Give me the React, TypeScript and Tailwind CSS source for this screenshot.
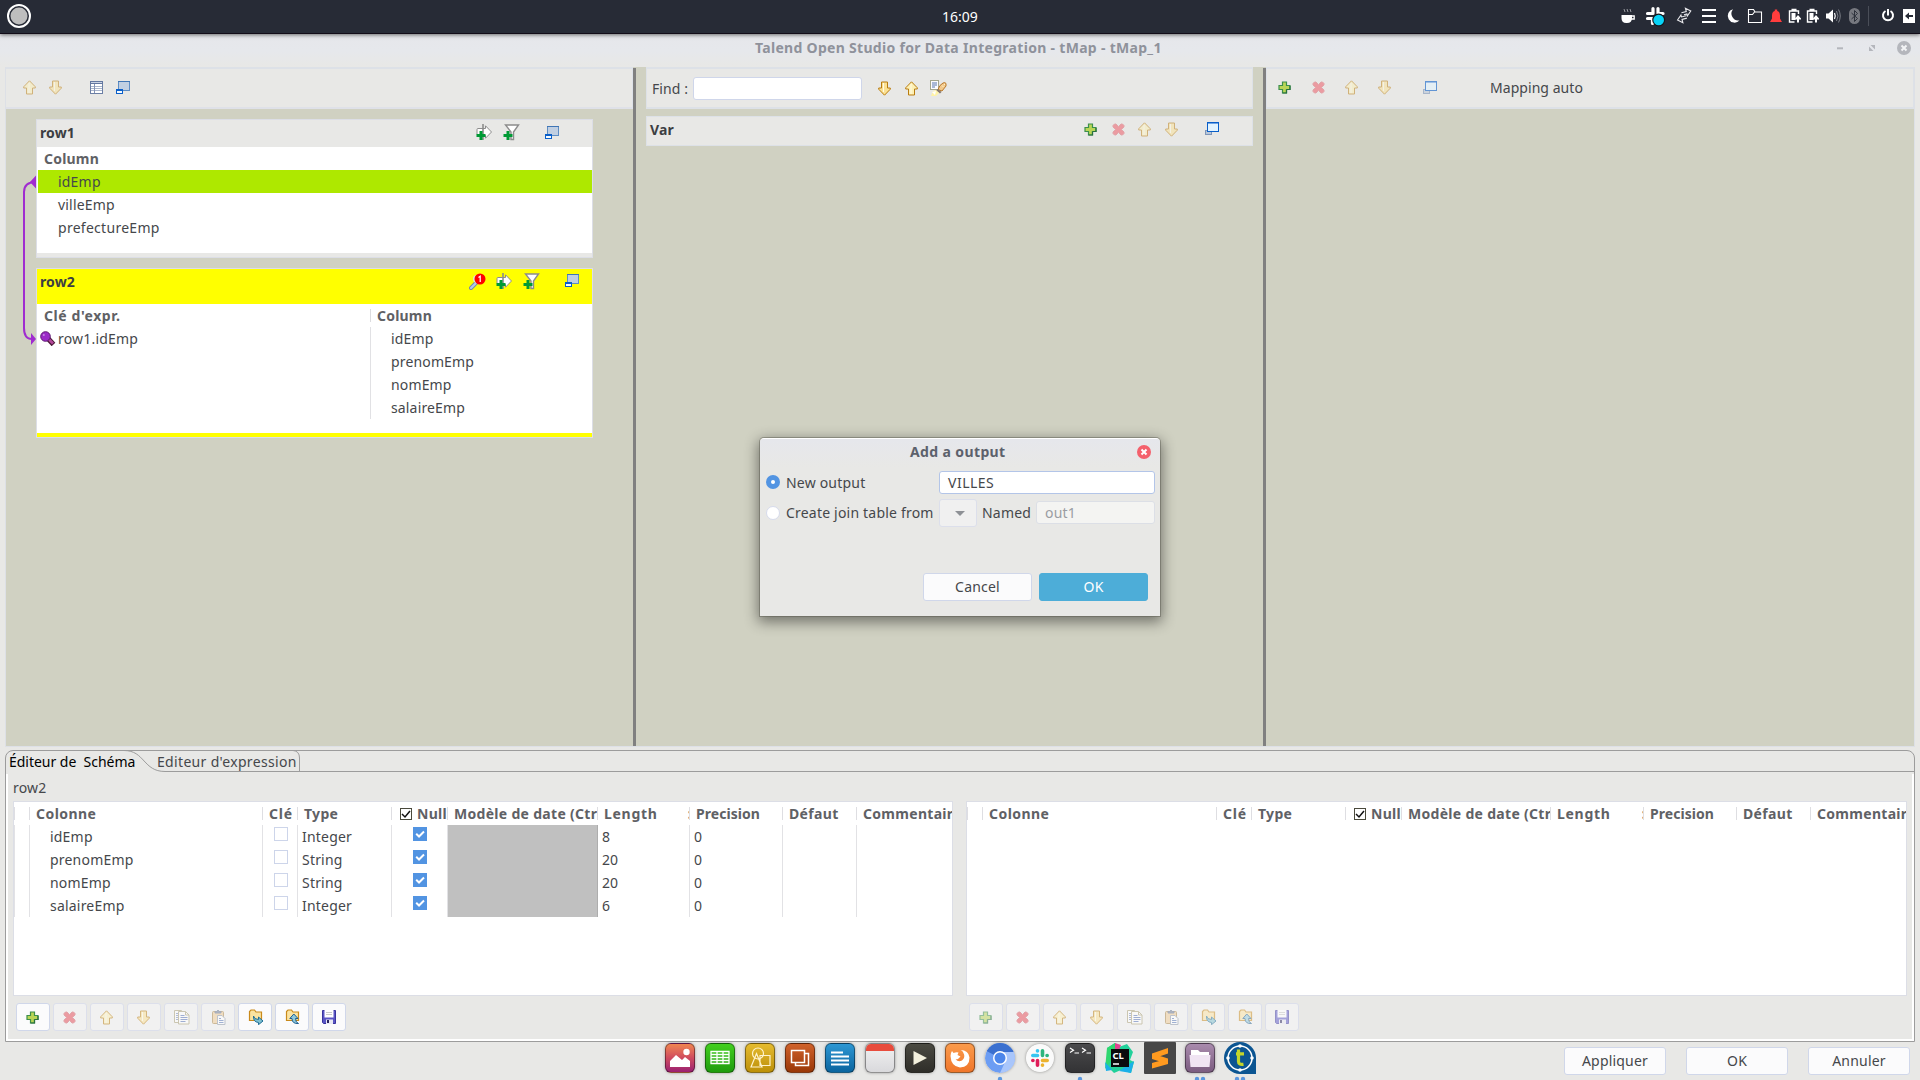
import type { ReactNode } from 'react';

type IconProps = { className?: string };

function Svg({ w = 16, h = 16, className = '', children, crisp = false }: { w?: number; h?: number; className?: string; children: ReactNode; crisp?: boolean }) {
  return (
    <svg width={w} height={h} viewBox={`0 0 ${w} ${h}`} className={`shrink-0 ${className}`} fill="none" shapeRendering={crisp ? 'crispEdges' : undefined}>
      {children}
    </svg>
  );
}

/* ---------- toolbar icons ---------- */

const ArrowUp = ({ className = '' }: IconProps) => (
  <Svg w={13} h={15} className={className}>
    <path d="M6.5 .8 12.3 6.8V8H9.5v6h-6V8H.7V6.800Z" fill="#fdf0b4" stroke="#b97c10" />
    <path d="M6 3v10" stroke="#fffbe6" />
  </Svg>
);
const ArrowDown = ({ className = '' }: IconProps) => (
  <Svg w={13} h={15} className={className}>
    <path d="M6.500 14.200 12.300 8.200V7H9.500V1h-6v6H.7v1.200Z" fill="#fbe193" stroke="#b97c10" />
    <path d="M5.500 2v9" stroke="#fffbe6" />
  </Svg>
);
const Plus = ({ className = '' }: IconProps) => (
  <Svg w={13} h={13} className={className}>
    <path d="M4.500 1h4v3.500h3.500v4H8.500v3.500h-4V8.500H1v-4h3.500Z" fill="#b9d556" stroke="#3c8f4c" strokeWidth="1.200" />
    <path d="M8.500 8.500v3.500h-4M12 5v3.500H9" stroke="#28703f" strokeWidth="1.200" />
  </Svg>
);
const Cross = ({ className = '' }: IconProps) => (
  <Svg w={13} h={13} className={className}>
    <path d="M1 2.500 2.500 1h1.500L6.500 3.700 9 1h1.500L12 2.500V4L9.300 6.500 12 9v1.500L10.500 12H9L6.500 9.300 4 12H2.500L1 10.500V9L3.700 6.500 1 4Z" fill="#eb9ba1" stroke="#e1a4a9" />
  </Svg>
);
const TableIcon = () => (
  <Svg w={14} h={14} crisp>
    <rect x=".5" y="1.500" width="12" height="12" fill="#fff" stroke="#6b7fa5" />
    <rect x="0" y="1" width="13" height="3" fill="#6377a0" />
    <path d="M1 6.500h11M1 8.500h11M1 10.500h11" stroke="#a9b5cc" />
    <path d="M4.500 4v9" stroke="#8292b4" />
    <path d="M1 2.500h11" stroke="#c9d3e4" />
  </Svg>
);
const Minimize = ({ className = '' }: IconProps) => (
  <Svg w={14} h={14} crisp className={className}>
    <rect x="2.500" y="1.500" width="11" height="9" fill="#c0cfe2" stroke="#5e8dc4" />
    <path d="M2 1.500h12" stroke="#3f75b5" />
    <rect x=".5" y="9.500" width="6" height="4" fill="#f4faff" stroke="#0a5fc9" />
    <path d="M0 10h7" stroke="#0a5fc9" />
  </Svg>
);
const Restore = ({ className = '' }: IconProps) => (
  <Svg w={14} h={14} crisp className={className}>
    <rect x=".5" y="9.500" width="6" height="4" fill="#b9c6d8" stroke="#7f96b8" />
    <rect x="2.500" y="1.500" width="11" height="9" fill="#e3f4ff" stroke="#0a5fc9" />
    <path d="M2 1.500h12" stroke="#0a5fc9" />
    <path d="M3 2.500h10" stroke="#6fa5e6" />
  </Svg>
);
const GreenCross = () => <path d="M3.500 7h3v3h3v3h-3v3h-3v-3h-3v-3h3Z" fill="#009a35" />;
const AddArrow = () => (
  <Svg w={17} h={17}>
    <path d="M1 10.500v-5Q1 4.500 2 4.500h7.500V1.800L15.500 8 9.500 14.200V11.500Z" fill="#fff" stroke="#8c8c8c" />
    <path d="M7 0v16" stroke="#8c8c8c" strokeWidth="1.600" />
    <GreenCross />
  </Svg>
);
const AddFilter = () => (
  <Svg w={17} h={17}>
    <path d="M2.500 1h13L10.500 8v7.500H8V8Z" fill="#fff" stroke="#8c8c8c" strokeWidth="1.400" />
    <GreenCross />
  </Svg>
);
const LookupIcon = () => (
  <Svg w={18} h={17}>
    <path d="M2 15 8 9" stroke="#6f86ac" strokeWidth="4" strokeLinecap="round" />
    <path d="M2 15 7 10" stroke="#b4c8e8" strokeWidth="2.200" strokeLinecap="round" />
    <circle cx="8" cy="6" r="4" fill="#dfe9d8" />
    <circle cx="11" cy="6" r="5.500" fill="#f00" />
    <path d="M9.500 4.500 11.200 3.200V9" stroke="#fff" strokeWidth="1.200" />
  </Svg>
);
const KeyIcon = () => (
  <Svg w={16} h={15}>
    <path d="M8 7.500 13.500 13.500" stroke="#4a1836" strokeWidth="5" />
    <path d="M7.500 7 13 12.500" stroke="#b3479a" strokeWidth="2.600" />
    <circle cx="5.500" cy="5.500" r="4.800" fill="#9b2bc7" stroke="#5d1a70" />
    <circle cx="3.800" cy="4" r="1" fill="#c98ae6" />
  </Svg>
);
const Highlight = () => (
  <Svg w={17} h={17}>
    <rect x=".5" y=".5" width="8" height="9" fill="#fbfcfe" stroke="#a3a68e" />
    <path d="M2 3h5M2 5h5M2 7h3" stroke="#5675ad" />
    <path d="M8 9.500 10 5.500l3-2.500q2-1 3 .5v2.500l-4 5Z" fill="#f2c98c" stroke="#b9782a" />
    <path d="M12 5.500 13.500 7M14 4l1 1" stroke="#fff1c9" />
    <path d="M8 9 11.500 12 10 13.500 6 10.500Z" fill="#86786f" />
    <path d="M3 11 6 10 9 13 6 16H1Z" fill="#fff3a8" />
    <path d="M2 12 6 11 5 15Z" fill="#fff" />
  </Svg>
);
const CopyIcon = () => (
  <Svg w={16} h={16}>
    <path d="M.5 1.500h7v12h-7Z" fill="#fff" stroke="#a79d73" />
    <path d="M2 4.500h3M2 6.500h3M2 8.500h3M2 10.500h3" stroke="#7186ba" />
    <path d="M4.500 2.500h7l3.500 3.500v9H4.500Z" fill="#fff" stroke="#a79d73" />
    <path d="M11.500 2.500V6H15" stroke="#a79d73" />
    <path d="M6.500 6.500h4M6.500 8.500h7M6.500 10.500h7M6.500 12.500h5" stroke="#4f6db5" />
  </Svg>
);
const PasteIcon = () => (
  <Svg w={16} h={16}>
    <rect x="1.500" y="2.500" width="11" height="12" rx="1" fill="#f0cb93" stroke="#a98243" />
    <path d="M4 4V2.500h1.500Q7 0 8.500 2.500H10V4Z" fill="#6c7a96" stroke="#5e6b87" />
    <path d="M6.500 6.500h4.500l3 3v6h-7.500Z" fill="#fff" stroke="#8b97a9" />
    <path d="M8 9.500h2M8 11.500h4.500M8 13.500h4.500" stroke="#5273b6" />
  </Svg>
);
const Folder = () => (
  <path d="M1.500 11.500v-9l1.500-1.500h3.500L8 3h5.500v8.500Z" fill="#fbe3a0" stroke="#c98a1b" strokeWidth="1.200" />
);
const ImportIcon = () => (
  <Svg w={16} h={16}>
    <Folder />
    <path d="M5.500 7q.5 3.500 5 3.500V8l4.500 4-4.500 3.700V13.500Q5 13 5.500 7Z" fill="#7fc0cf" stroke="#1f6d96" />
  </Svg>
);
const ExportIcon = () => (
  <Svg w={16} h={16}>
    <Folder />
    <path d="M13.500 14.500Q7 15 7 9.500H4.800L8.800 5l4.200 4.500H10.500q0 4 3 5Z" fill="#8fc9dc" stroke="#1f5f90" />
  </Svg>
);
const SaveIcon = () => (
  <Svg w={14} h={16}>
    <path d="M.5 1.500h13v13H1.500l-1-1Z" fill="#5a55c4" stroke="#39349e" />
    <rect x="2.500" y="1" width="9" height="7.500" fill="#fff" />
    <path d="M4 3.500h6M4 5.500h6" stroke="#c9c9c9" />
    <rect x="4" y="10.500" width="7" height="4.500" fill="#e9e9f4" />
    <rect x="5" y="11" width="2" height="3" fill="#28235c" />
  </Svg>
);

/* ---------- top panel ---------- */

function TopBar() {
  return (
    <div className="z-10 flex h-[34px] shrink-0 items-center border-b border-[#120c18] bg-[#272b36] pb-px shadow-[0_1px_4px_rgba(0,0,0,0.55)]">
      <Svg w={26} h={26} className="ml-[6px]">
        <circle cx="13" cy="13" r="11" stroke="#fff" strokeWidth="2" />
        <circle cx="13" cy="13" r="8.500" fill="#bebebe" />
      </Svg>
      <span className="ml-[910px] w-[37px] pt-px text-[14px] tracking-normal text-white">16:09</span>
      <Svg w={300} h={32} className="ml-[641px]">
        {/* cup */}
        <path d="M1.500 15h10.500v3q0 5-5 5h-.8q-4.700 0-4.700-5Z" fill="#fff" />
        <path d="M12 16h2.200v3H11" stroke="#fff" strokeWidth="1.300" />
        <path d="M4 9l1 3M7 9l1 3M10 9l1 3" stroke="#9a9ca2" />
        {/* slack */}
        <g stroke="#fff" strokeWidth="3.200" strokeLinecap="round">
          <path d="M33 8.500v5M27.500 13.500h5M38 8.500v5M38 13.500h5M27.500 18.500h5v5" />
        </g>
        <circle cx="38.700" cy="20" r="6.500" fill="#14161c" />
        <circle cx="38.700" cy="20" r="5.300" fill="#07d3f7" />
        {/* transfer */}
        <path d="M62 12.500h5V9l4.500 4-4.500 4v-2h-3M66 16.500h-5v-2l-4.500 4 4.500 4V19h5" stroke="#e9e9ec" strokeWidth="1.100" transform="rotate(-14 63 15)" />
        {/* menu */}
        <path d="M82 10h14M82 16h14M82 22h14" stroke="#fff" strokeWidth="2" />
        {/* moon */}
        <path d="M113 9.200a6.800 6.800 0 1 0 6.500 11.300A7 7 0 0 1 113 9.200Z" fill="#fff" />
        {/* folder */}
        <path d="M128.500 22.500v-13h5l1.500 2.500h6.500v10.500ZM128.500 14.500h4l2-2.500" stroke="#fff" strokeWidth="1.100" />
        {/* bell */}
        <path d="M150 22h12l-2-3.500v-3q0-4-2.800-4.500V9.500h-2.400v1.500Q152 11.500 152 15.500v3Z" fill="#ff3d3d" />
        {/* batteries */}
        {[168.5, 186.500].map((x) => (
          <g key={x}>
            <path d={`M${x + 6} 22h-5V11h9v3M${x + 3} 9.500h5`} stroke="#fff" strokeWidth="1.400" />
            <rect x={x + 3} y="13" width="4" height="7" fill="#fff" />
            <path d={`M${x + 6.5} 18.500l3-3.500 3 3.500v1h-2V22.500h-2v-3h-2Z`} fill="#fff" />
          </g>
        ))}
        {/* volume */}
        <path d="M206 13.500h2.500L213 9.500v13l-4.500-4H206Z" fill="#fff" />
        <path d="M214.500 13q1.500 3 0 6" stroke="#fff" strokeWidth="1.200" />
        <path d="M216.500 11q3 5 0 10M218.500 9.500q3.500 6.500 0 13" stroke="#7c7f87" />
        {/* bluetooth */}
        <rect x="229" y="8" width="11" height="16" rx="5.500" fill="#76787f" />
        <path d="M231.500 13l6 5.500-3 3v-11l3 3-6 5.500" stroke="#2e323c" />
        <path d="M248.500 6v20" stroke="#4a4e58" />
        {/* power */}
        <path d="M265.500 11a5 5 0 1 0 5 0" stroke="#fff" strokeWidth="2" />
        <path d="M268 9v6.500" stroke="#fff" strokeWidth="2" />
        {/* log out */}
        <rect x="283" y="9" width="12" height="14" fill="#fff" />
        <path d="M293 16h-6" stroke="#272b36" strokeWidth="2" />
        <path d="M285 16l4-3.500v7Z" fill="#272b36" />
      </Svg>
    </div>
  );
}

function TitleBar() {
  return (
    <div className="flex h-[33px] shrink-0 items-start bg-gradient-to-b from-[#e6e7eb] via-[#e6e8ec] to-[#e8e8e6] pt-[4px]">
      <span className="ml-[755px] h-5 w-[1000px] text-[14px] leading-5 font-bold tracking-[0.3px] text-[#8f929b]">Talend Open Studio for Data Integration - tMap - tMap_1</span>
      <Svg w={80} h={20} className="ml-[82px]">
        <path d="M0 10.300h6" stroke="#b4b6bc" strokeWidth="2" />
        <path d="M33.500 7h4.500v4.500ZM32 8.500v4.500h4.500Z" fill="#b4b6bc" />
        <circle cx="67" cy="10" r="7" fill="#b4b6bc" />
        <path d="M64.500 7.500l5 5M69.500 7.500l-5 5" stroke="#f3f4f6" strokeWidth="2" />
      </Svg>
    </div>
  );
}

/* ---------- mapper area ---------- */

const bold = 'font-bold tracking-[0.2px]';

function Row({ children, className = '' }: { children?: ReactNode; className?: string }) {
  return <div className={`flex h-[23px] items-center whitespace-pre ${className}`}>{children}</div>;
}

function InputPanel() {
  return (
    <div className="relative flex w-[628px] shrink-0 flex-col border-l border-[#dde0e6]">
      <div className="flex h-[42px] items-center border-y-2 border-r border-[#dde1e7] border-b-[#dfe1e8] bg-[#e8e8e6] pb-px">
        <ArrowUp className="ml-[17px] opacity-50" />
        <ArrowDown className="ml-[13px] opacity-50" />
        <span className="mb-[2px] ml-[28px]"><TableIcon /></span>
        <span className="mb-[2px] ml-[12px]"><Minimize /></span>
      </div>

      <div className="mt-[10px] ml-[30px] w-[557px] border border-[#dcdee6] bg-[#e8e8e6]">
        <div className="flex h-[27px] items-center pb-[2px]">
          <span className="ml-[3px] w-[436px] text-[#3c3e42] font-bold tracking-[0.1px]">row1</span>
          <AddArrow />
          <span className="ml-[10px]"><AddFilter /></span>
          <span className="mb-[2px] ml-[25px]"><Minimize /></span>
        </div>
        <div className="h-[106px] bg-white">
          <Row className={`pl-[7px] text-[#5f6165] ${bold}`}>Column</Row>
          <Row className="ml-px bg-[#aee800] pl-[20px]">idEmp</Row>
          <Row className="pl-[21px]">villeEmp</Row>
          <Row className="pl-[21px] tracking-[0.28px]">prefectureEmp</Row>
        </div>
        <div className="h-[4px]" />
      </div>

      <div className="mt-[10px] ml-[30px] w-[557px] border border-[#dcdee6] bg-[#ffff00]">
        <div className="flex h-[35px] items-start pt-[3px]">
          <span className="ml-[3px] w-[429px] leading-[20px] text-[#3c3e42] font-bold tracking-[0.1px]">row2</span>
          <span className="mt-px"><LookupIcon /></span>
          <span className="mt-px ml-[9px]"><AddArrow /></span>
          <span className="mt-px ml-[10px]"><AddFilter /></span>
          <span className="mt-px ml-[25px]"><Minimize /></span>
        </div>
        <div className="flex h-[129px] bg-white">
          <div className="w-[333px]">
            <Row className="pl-[7px] font-bold tracking-[0.6px] text-[#5f6165]">Clé d'expr.</Row>
            <Row className="pl-[3px]"><KeyIcon /><span className="ml-[2px]">row1.idEmp</span></Row>
          </div>
          <div className="w-px pt-[5px]">
            <div className="h-[13px] bg-[#dcdcdf]" />
            <div className="mt-[5px] h-[92px] bg-[#e1e1e4]" />
          </div>
          <div>
            <Row className={`pl-[6px] text-[#5f6165] ${bold}`}>Column</Row>
            {['idEmp', 'prenomEmp', 'nomEmp', 'salaireEmp'].map((c) => <Row key={c} className="pl-[20px] tracking-[0.15px]">{c}</Row>)}
          </div>
        </div>
        <div className="h-[4px]" />
      </div>

      <svg width="24" height="180" viewBox="0 0 24 180" fill="none" className="absolute top-[103px] left-[9px]">
        <path d="M21 12Q9 12 9 22V158Q9 169 17 169" stroke="#a02cd0" strokeWidth="2" />
        <path d="M15 12 21 5.500v13ZM21 169l-5-6v12Z" fill="#a02cd0" />
      </svg>
    </div>
  );
}

function VarPanel() {
  return (
    <div className="flex w-[627px] shrink-0 flex-col border-x-0 pl-[10px]">
      <div className="flex h-[42px] w-[607px] items-center border-y-2 border-x border-[#dde1e7] bg-[#e8e8e6]">
        <span className="ml-[5px] w-[41px] pt-px tracking-[0.1px]">Find :</span>
        <div className="h-[23px] w-[169px] rounded-[3px] border border-[#cfd6ea] bg-white" />
        <ArrowDown className="ml-[16px]" />
        <ArrowUp className="ml-[14px]" />
        <span className="ml-[12px]"><Highlight /></span>
      </div>
      <div className="mt-[7px] flex h-[30px] w-[607px] items-center border border-[#dde1e7] bg-[#e8e8e6] pb-[3px]">
        <span className="ml-[3px] w-[434px] font-bold tracking-[0.2px] text-[#3c3e42]">Var</span>
        <Plus />
        <Cross className="ml-[15px]" />
        <ArrowUp className="ml-[13px] opacity-50" />
        <ArrowDown className="ml-[14px] opacity-50" />
        <Restore className="mb-[3px] ml-[27px]" />
      </div>
    </div>
  );
}

function OutputPanel() {
  return (
    <div className="flex grow flex-col border-r border-[#dde0e6]">
      <div className="flex h-[42px] items-center border-y-2 border-x border-[#dde1e7] bg-[#e8e8e6] pb-px">
        <Plus className="ml-[11px]" />
        <Cross className="ml-[21px]" />
        <ArrowUp className="ml-[20px] opacity-50" />
        <ArrowDown className="ml-[20px] opacity-50" />
        <Restore className="mb-px ml-[32px] opacity-60" />
        <span className="ml-[53px] tracking-[0.05px]">Mapping auto</span>
      </div>
    </div>
  );
}

/* ---------- schema editor ---------- */

function ClassicCheck() {
  return (
    <Svg w={12} h={12} crisp>
      <rect x=".5" y=".5" width="11" height="11" fill="#fff" stroke="#4a4a3c" />
      <path d="M2 6l3 3 5-6" stroke="#111" strokeWidth="1.500" shapeRendering="auto" />
    </Svg>
  );
}

type SchemaRow = { name: string; type: string; length: string };
const schema: SchemaRow[] = [
  { name: 'idEmp', type: 'Integer', length: '8' },
  { name: 'prenomEmp', type: 'String', length: '20' },
  { name: 'nomEmp', type: 'String', length: '20' },
  { name: 'salaireEmp', type: 'Integer', length: '6' },
];

const leftGrid = 'grid-cols-[15px_233px_35px_94px_56px_150px_92px_93px_74px_98px]';
const rightGrid = 'grid-cols-[15px_234px_35px_94px_56px_149px_93px_93px_74px_98px]';

function HeadCell({ children }: { children?: ReactNode }) {
  return (
    <div className="flex items-center overflow-hidden">
      <div className="h-[13px] w-px shrink-0 bg-[#dedee2]" />
      {children}
    </div>
  );
}
function Cell({ children, className = '' }: { children?: ReactNode; className?: string }) {
  return <div className={`flex items-center border-l border-[#e2e2e5] ${className}`}>{children}</div>;
}

function SchemaTable({ rows, grid, width }: { rows: SchemaRow[]; grid: string; width: string }) {
  return (
    <div className={`h-[195px] shrink-0 overflow-hidden border border-[#dcdee6] bg-white ${width}`}>
      <div className={`grid h-[23px] whitespace-nowrap font-bold tracking-[0.3px] text-[#5f6165] ${grid}`}>
        <HeadCell />
        <HeadCell><span className="ml-[6px] tracking-[0.45px]">Colonne</span></HeadCell>
        <HeadCell><span className="ml-[6px] tracking-[0.8px]">Clé</span></HeadCell>
        <HeadCell><span className="ml-[6px]">Type</span></HeadCell>
        <HeadCell><span className="mr-[5px] ml-[8px]"><ClassicCheck /></span>Nulla</HeadCell>
        <HeadCell><span className="ml-[6px] tracking-[0.3px]">Modèle de date (Ctrl</span></HeadCell>
        <HeadCell><span className="ml-[6px] tracking-[0.7px]">Length</span><span className="ml-auto -mr-[3px]">:</span></HeadCell>
        <HeadCell><span className="ml-[6px] tracking-[0.05px]">Precision</span></HeadCell>
        <HeadCell><span className="ml-[6px] tracking-[0.35px]">Défaut</span></HeadCell>
        <HeadCell><span className="ml-[6px] tracking-[0.3px]">Commentaire</span></HeadCell>
      </div>
      {rows.map((r) => (
        <div key={r.name} className={`grid h-[23px] ${grid}`}>
          <Cell />
          <Cell className="pl-[20px]">{r.name}</Cell>
          <Cell className="pb-[5px] pl-[11px]"><div className="size-[14px] border border-[#cdd5ea] bg-white" /></Cell>
          <Cell className="pl-[4px]">{r.type}</Cell>
          <Cell className="pb-[5px] pl-[21px]">
            <Svg w={14} h={14}>
              <rect width="14" height="14" fill="#5294e2" />
              <path d="M3.200 6.800l2.800 2.700 5-5" stroke="#fff" strokeWidth="2" />
            </Svg>
          </Cell>
          <Cell className="bg-[#c0c0c0]" />
          <Cell className="border-l-[#adadad] pl-[4px] tracking-normal">{r.length}</Cell>
          <Cell className="pl-[4px]">0</Cell>
          <Cell />
          <Cell />
        </div>
      ))}
    </div>
  );
}

function ToolButtons({ enabled }: { enabled: boolean[] }) {
  const icons = [<Plus />, <Cross />, <ArrowUp />, <ArrowDown />, <CopyIcon />, <PasteIcon />, <ImportIcon />, <ExportIcon />, <SaveIcon />];
  return (
    <div className="flex gap-[3px]">
      {icons.map((icon, i) => (
        <div
          key={i}
          className={`flex h-[28px] w-[34px] items-center justify-center rounded-[3px] border ${enabled[i] ? 'border-[#d0d7ea] bg-[#fbfbfc]' : 'border-[#dcdfeb] bg-[#f1f1f1]'}`}
        >
          <span className={`${enabled[i] || i === 1 ? '' : 'opacity-50'} ${i < 4 ? 'pr-px' : i < 8 ? 'pl-px' : ''}`}>{icon}</span>
        </div>
      ))}
    </div>
  );
}

function PushButton({ children, primary = false, className = '' }: { children: string; primary?: boolean; className?: string }) {
  return (
    <div className={`flex h-[28px] items-center justify-center rounded-[3px] border ${primary ? 'border-[#4dadd8] bg-[#4dadd8] text-white' : 'border-[#d0d7ea] bg-[#fbfbfc]'} ${className}`}>
      {children}
    </div>
  );
}

function SchemaEditor() {
  const on = [true, false, false, false, false, false, true, true, true];
  const off = on.map(() => false);
  return (
    <div className="mt-[3px] ml-[5px] flex h-[292px] w-[1910px] shrink-0 flex-col rounded-t-[8px] border border-[#9c9c9c]">
      <div className="relative flex h-[21px] shrink-0">
        <svg width="1908" height="22" viewBox="0 0 1908 22" fill="none" className="absolute top-0 left-0">
          <path d="M118 -.5C139 -.5 137 20.500 159 20.500H1908" stroke="#9c9c9c" />
          <path d="M118 -.5H287Q293.500 0 293.500 7V20.500" stroke="#9c9c9c" />
        </svg>
        <span className="ml-[3px] w-[148px] leading-[22px] whitespace-pre text-black tracking-[-0.02px]">Éditeur de  Schéma</span>
        <span className="leading-[22px] tracking-[0.33px]">Editeur d'expression</span>
      </div>
      <div className="mt-[2px] flex grow flex-col border-x-2 border-b-2 border-white pl-[5px]">
        <span className="mt-[3px] h-[24px] leading-[22px]">row2</span>
        <div className="flex">
          <SchemaTable rows={schema} grid={leftGrid} width="w-[940px]" />
          <SchemaTable rows={[]} grid={rightGrid} width="ml-[13px] w-[941px]" />
        </div>
        <div className="mt-[7px] ml-[3px] flex">
          <div className="w-[953px]"><ToolButtons enabled={on} /></div>
          <ToolButtons enabled={off} />
        </div>
      </div>
    </div>
  );
}

/* ---------- dialog ---------- */

function OutputDialog() {
  return (
    <div className="absolute top-[438px] left-[760px] flex h-[178px] w-[400px] flex-col rounded-t-[4px] border-t border-white bg-[#e8e8e6] shadow-[0_0_0_1px_rgba(90,90,80,0.45),0_4px_14px_2px_rgba(0,0,0,0.45)]">
      <div className="flex h-[28px] items-center rounded-t-[4px] bg-gradient-to-b from-[#e6e7ec] to-[#e8e8e6] pb-[2px]">
        <span className="ml-[150px] w-[227px] font-bold tracking-[0.38px] text-[#5c616c]">Add a output</span>
        <Svg w={14} h={14}>
          <circle cx="7" cy="7" r="7" fill="#f4606c" />
          <path d="M4.500 4.500l5 5M9.500 4.500l-5 5" stroke="#fff" strokeWidth="2" />
        </Svg>
      </div>
      <div className="mt-[4px] flex h-[23px] items-center">
        <div className="mb-[2px] ml-[6px] flex size-[14px] items-center justify-center rounded-full bg-[#5294e2]">
          <div className="size-[4px] rounded-full bg-white" />
        </div>
        <span className="ml-[6px] w-[153px]">New output</span>
        <div className="flex h-[23px] w-[216px] items-center rounded-[3px] border border-[#b3c5e8] bg-white pl-[8px] tracking-[0.5px]">VILLES</div>
      </div>
      <div className="mt-[5px] flex h-[28px] items-center">
        <div className="ml-[6px] size-[14px] rounded-full border border-[#d6dbec] bg-white" />
        <span className="ml-[6px] w-[153px]">Create join table from</span>
        <div className="flex h-[28px] w-[38px] items-center justify-center rounded-[3px] border border-[#dcdfeb] bg-[#f0f0f0] pl-[4px]">
          <Svg w={10} h={5}><path d="M0 0h10L5 5Z" fill="#8e9196" /></Svg>
        </div>
        <span className="ml-[5px] w-[54px]">Named</span>
        <div className="mb-px flex h-[23px] w-[119px] items-center rounded-[3px] border border-[#dcdfe6] bg-[#f4f4f2] pl-[8px] text-[#9a9da2]">out1</div>
      </div>
      <div className="mt-[46px] ml-[163px] flex gap-[7px]">
        <PushButton className="w-[109px]">Cancel</PushButton>
        <PushButton primary className="w-[109px]">OK</PushButton>
      </div>
    </div>
  );
}

/* ---------- dock ---------- */

function Tile({ className, children }: { className: string; children?: ReactNode }) {
  return (
    <div className={`size-[30px] overflow-hidden rounded-[6px] border border-black/40 shadow-[0_0_3px_rgba(0,0,0,0.35)] ${className}`}>
      <svg width="28" height="28" viewBox="0 0 28 28" fill="none">{children}</svg>
    </div>
  );
}

function Dock() {
  return (
    <div className="absolute top-[1042px] left-[665px] flex items-start gap-[10px] pt-px">
      <Tile className="bg-gradient-to-b from-[#f0854f] via-[#cf4a5e] to-[#9b1e70]">
        <path d="M4 23v-6l6-6 6 5 3-3 5 4v6Z" fill="#fff" />
        <circle cx="20.500" cy="8" r="3.200" fill="#fff" />
      </Tile>
      <Tile className="bg-gradient-to-b from-[#43cf1f] to-[#1e9c0d]">
        <path d="M5 7.500h18v12H5ZM5 10.500h18M5 13.500h18M5 16.500h18M11 7.500v12M17 7.500v12" stroke="#fff" strokeWidth="1.300" />
      </Tile>
      <Tile className="bg-gradient-to-b from-[#e5bb2e] to-[#bd9005]">
        <circle cx="12" cy="9.500" r="5.500" stroke="#fff3cc" strokeWidth="1.200" />
        <path d="M14 11.500h10v10H14ZM10.500 9.500 16 23H5Z" stroke="#fff3cc" strokeWidth="1.200" />
      </Tile>
      <Tile className="bg-gradient-to-b from-[#d0622a] to-[#9a3706]">
        <path d="M9.500 18.500v3h13v-12H18.500M5.500 6.500h13v12h-13Z" stroke="#fff" strokeWidth="1.500" />
      </Tile>
      <Tile className="bg-gradient-to-b from-[#2d97d3] to-[#0a659f]">
        <path d="M5 8.500h12M5 12.500h18M5 16.500h18M5 20.500h18" stroke="#fff" strokeWidth="2" />
      </Tile>
      <Tile className="bg-gradient-to-b from-[#f2f2f2] to-[#d9d9dc]">
        <rect width="28" height="7" fill="#e84c3d" />
      </Tile>
      <Tile className="bg-gradient-to-b from-[#4b4a42] to-[#2f2e29]">
        <path d="M7.500 7v14l13.500-7Z" fill="#f3f0dd" />
      </Tile>
      <Tile className="bg-gradient-to-b from-[#fa9b4c] to-[#f0762a]">
        <path d="M4.500 12Q4.500 9 6 7l1.500 2q2.500-1 5-.5l-1 2.500 3 1.500-2.500 2.500q-1.500.5-2.500 0 2.500 3.500 6.500 1.500 4-3 1-8.500-1-1.500-2.500-2 8 0 9 7.500 0 9.500-9.500 10-9-1-9.500-11.500Z" fill="#fff" />
      </Tile>
      <div className="size-[30px] overflow-hidden rounded-full shadow-[0_0_3px_rgba(0,0,0,0.35)]">
        <svg width="30" height="30" viewBox="0 0 30 30">
          <circle cx="15" cy="15" r="15" fill="#6c9df3" />
          <path d="M15 15 1.500 8A15 15 0 0 1 29 9H15Z" fill="#3b70cf" />
          <path d="M15 9h14.200A15 15 0 0 1 15 30l5.500-12Z" fill="#a9c6fb" />
          <circle cx="15" cy="15" r="7" fill="#fff" />
          <circle cx="15" cy="15" r="5.500" fill="#4c86ea" />
        </svg>
      </div>
      <div className="size-[30px] p-px">
        <svg width="28" height="28" viewBox="0 0 28 28" fill="none" className="rounded-full shadow-[0_0_3px_rgba(0,0,0,0.4)]">
          <circle cx="14" cy="14" r="14" fill="#fafafa" />
          <g strokeWidth="3.600" strokeLinecap="round">
            <path d="M11.500 6.800v.2M6.800 11.500h4.700" stroke="#36c5f0" />
            <path d="M16.500 6.800v4.700M21.200 11.500h-.2" stroke="#2eb67d" />
            <path d="M6.800 16.500h.2M11.500 16.500v4.700" stroke="#e01e5a" />
            <path d="M21.200 16.500h-4.700M16.500 21.200v-.2" stroke="#ecb22e" />
          </g>
        </svg>
      </div>
      <Tile className="bg-gradient-to-b from-[#4a4a4c] to-[#333335]">
        <path d="M4 4l3.500 2.200L4 8.500M8.500 9H13M16 4l3.500 2.200L16 8.500M20.500 9H25" stroke="#fff" strokeWidth="1.200" />
      </Tile>
      <svg width="30" height="30" viewBox="0 0 30 30">
        <path d="M2 5 10 0l4 4 8-3 6 8-3 8 4 2-3 11-10-3-7 3L1 22l2-6Z" fill="#21d19a" />
        <path d="M2 5 10 0l2 10L0 26Z" fill="#2fd76f" />
        <path d="M10 0l6 2-2 5h-4Z" fill="#e0418f" />
        <path d="M14 28 29 18 26 30ZM0 19l7 8-6 1Z" fill="#1bb0e8" />
        <rect x="6" y="6" width="18" height="18" fill="#0b0b0c" />
        <path d="M8 21h6" stroke="#fff" strokeWidth="1.500" />
        <text x="7.500" y="15.500" fill="#fff" fontSize="9.500" fontWeight="700" letterSpacing="0" fontFamily="Noto Sans, sans-serif">CL</text>
      </svg>
      <svg width="32" height="32" viewBox="0 0 32 32" className="-mt-px -mr-px -ml-px">
        <rect width="32" height="32" rx="1" fill="#474747" />
        <path d="M8 11.500 24 6v5.500L8 17ZM8 11.500 24 16.500v5.500L8 17ZM24 16.500v5.500L8 26.500v-5.500Z" fill="#ff9a1f" />
      </svg>
      <Tile className="bg-gradient-to-b from-[#a98bad] to-[#7b5c80]">
        <path d="M5 6h7l2 2h9v5H5Z" fill="#fff" />
        <path d="M3.500 11h21l-1 12h-19Z" fill="#f0e4f3" />
      </Tile>
      <svg width="32" height="32" viewBox="0 0 32 32" className="-mt-px -ml-px">
        <path d="M16 0a16 16 0 0 1 16 16v16H16a16 16 0 0 1 0-32Z" fill="#0b5592" />
        <circle cx="16" cy="16" r="12" stroke="#fff" strokeWidth="1.500" fill="none" />
        <g fill="#fff"><circle cx="16" cy="4" r="1.800" /><circle cx="16" cy="28" r="1.800" /><circle cx="4" cy="16" r="1.800" /><circle cx="28" cy="16" r="1.800" /></g>
        <path d="M14.500 7.500v12q0 3.500 5 2.800M12 11.800h8" stroke="#c3d52c" strokeWidth="3.200" fill="none" />
      </svg>
    </div>
  );
}

function DockMarks() {
  return (
    <svg width="260" height="4" viewBox="0 0 260 4" fill="#5b98e0" className="absolute top-[1076px] left-[990px]">
      {[10, 90, 207, 213, 247, 253].map((x) => <circle key={x} cx={x} cy="3" r="2.200" />)}
    </svg>
  );
}

export default function App() {
  return (
    <div className="relative flex h-[1080px] w-[1920px] flex-col overflow-hidden bg-[#e8e8e6] font-['Noto_Sans',sans-serif] text-[14px] leading-[20px] tracking-[0.2px] text-[#45474b]">
      <TopBar />
      <TitleBar />
      <div className="ml-[5px] flex h-[680px] w-[1910px] shrink-0 border-b border-[#dde0e6] bg-[#d0d1c2]">
        <InputPanel />
        <div className="mt-px w-[3px] shrink-0 bg-[#808080]" />
        <VarPanel />
        <div className="mt-px w-[3px] shrink-0 bg-[#808080]" />
        <OutputPanel />
      </div>
      <SchemaEditor />
      <div className="mt-[5px] mr-[10px] flex justify-end gap-[20px]">
        <PushButton className="w-[102px]">Appliquer</PushButton>
        <PushButton className="w-[102px]">OK</PushButton>
        <PushButton className="w-[102px]">Annuler</PushButton>
      </div>
      <OutputDialog />
      <Dock />
      <DockMarks />
    </div>
  );
}
